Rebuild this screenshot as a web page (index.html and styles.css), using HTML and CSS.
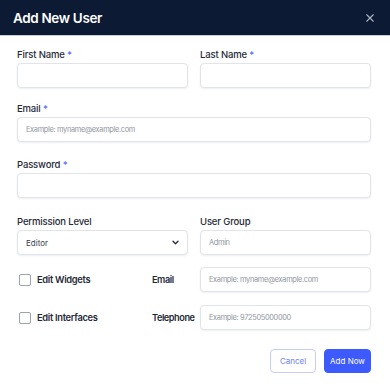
FILE: index.html
```html
<!DOCTYPE html>
<html>
<head>
<meta charset="utf-8">
<link rel="stylesheet" href="styles.css">
</head>
<body>
<div class="modal">
  <header class="modal-header">
    <h1 class="title">Add New User</h1>
    <svg class="close" width="8" height="8" viewBox="0 0 8 8"><path d="M0.5 0.5L7.5 7.5M7.5 0.5L0.5 7.5" stroke="#aeb5c2" stroke-width="1.1" fill="none"/></svg>
  </header>
  <div class="modal-body">
    <div class="row two first">
      <div class="field">
        <label class="label">First Name <span class="req">*</span></label>
        <div class="input"></div>
      </div>
      <div class="field">
        <label class="label">Last Name <span class="req">*</span></label>
        <div class="input"></div>
      </div>
    </div>
    <div class="field email-field">
      <label class="label">Email <span class="req">*</span></label>
      <div class="input"><span class="ph">Example: myname@example.com</span></div>
    </div>
    <div class="field pass-field">
      <label class="label">Password <span class="req">*</span></label>
      <div class="input"></div>
    </div>
    <div class="row two perm">
      <div class="field">
        <label class="label">Permission Level</label>
        <div class="input select"><span class="val">Editor</span>
          <svg width="7" height="5" viewBox="0 0 7 5"><path d="M1 1.2L3.5 3.7L6 1.2" stroke="#1f2937" stroke-width="1.3" fill="none" stroke-linecap="round" stroke-linejoin="round"/></svg>
        </div>
      </div>
      <div class="field">
        <label class="label">User Group</label>
        <div class="input"><span class="ph">Admin</span></div>
      </div>
    </div>
    <div class="opt-row">
      <div class="check"><span class="box"></span><span class="check-label">Edit Widgets</span></div>
      <span class="side-label">Email</span>
      <div class="input"><span class="ph">Example: myname@example.com</span></div>
    </div>
    <div class="opt-row second">
      <div class="check"><span class="box"></span><span class="check-label">Edit Interfaces</span></div>
      <span class="side-label">Telephone</span>
      <div class="input"><span class="ph">Example: 972505000000</span></div>
    </div>
    <div class="actions">
      <button class="btn cancel">Cancel</button>
      <button class="btn primary">Add Now</button>
    </div>
  </div>
</div>
</body>
</html>
```

FILE: styles.css
```css
* { box-sizing: border-box; margin: 0; padding: 0; }
html, body { background: #ffffff; }
body { font-family: Inter, "Noto Sans", sans-serif; width: 390px; height: 390px; overflow: hidden; }

.modal-header {
  height: 36px;
  background: #0c1b33;
  border-bottom: 1px solid #c9ced6;
  display: flex;
  align-items: center;
  justify-content: space-between;
  padding: 0 16px 0 13px;
}
.title { color: #ffffff; font-size: 13.5px; font-weight: 600; letter-spacing: -0.35px; }
.close { display: block; }

.modal-body { padding: 9px 19px 0 17px; }

.row.two { display: grid; grid-template-columns: 1fr 1fr; column-gap: 12px; }
.field { display: flex; flex-direction: column; }
.label { font-size: 9.5px; line-height: 15px; padding-top: 2px; font-weight: 500; color: #1f2937; margin-bottom: 1px; letter-spacing: -0.15px; }
.req { color: #4f6bff; }

.input {
  height: 25px;
  border: 1px solid #e1e4e9;
  border-radius: 4px;
  box-shadow: 0 1px 2px rgba(16, 24, 40, 0.07);
  display: flex;
  align-items: center;
  padding: 0 8px;
  background: #fff;
}
.ph { font-size: 7.4px; color: #8f959e; letter-spacing: -0.32px; white-space: nowrap; }
.val { font-size: 8px; color: #374151; }
.select { justify-content: space-between; padding-right: 8px; }

.email-field { margin-top: 11px; }
.pass-field { margin-top: 13px; }
.perm { margin-top: 14px; }

.opt-row {
  display: grid;
  grid-template-columns: 135px 48px 1fr;
  align-items: center;
  margin-top: 12px;
}
.opt-row.second { margin-top: 13px; }
.check { display: flex; align-items: center; padding-left: 2px; }
.box { width: 12px; height: 12px; border: 1px solid #9ca3af; border-radius: 2px; margin-right: 6px; }
.check-label { font-size: 9.3px; font-weight: 600; color: #1f2937; letter-spacing: -0.3px; white-space: nowrap; }
.side-label { font-size: 9.2px; font-weight: 600; color: #1f2937; letter-spacing: -0.45px; white-space: nowrap; }

.actions { display: flex; justify-content: flex-end; gap: 8px; margin-top: 19px; }
.btn { height: 24px; border-radius: 4px; font-family: Inter, sans-serif; font-size: 8px; padding: 0; white-space: nowrap; }
.cancel { width: 46px; background: #fff; border: 1px solid #c5cdfb; color: #6f82f5; }
.primary { width: 47px; background: #3d5afe; border: 1px solid #3d5afe; color: #fff; }
```
